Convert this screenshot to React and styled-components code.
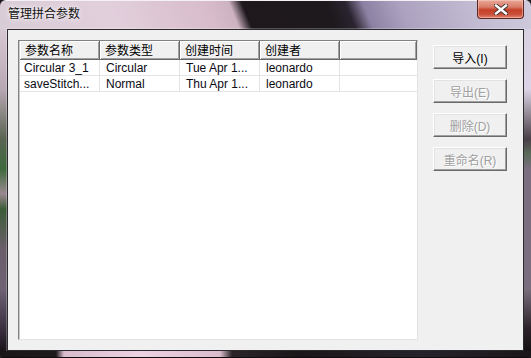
import React from "react";
import styled, { createGlobalStyle } from "styled-components";

const GlobalStyle = createGlobalStyle`
  html, body {
    margin: 0;
    padding: 0;
    background: #1c1a1c;
  }
  body {
    font-family: "Liberation Sans", "Noto Sans CJK SC", sans-serif;
    font-size: 12px;
  }
`

const Window = styled.div`
  width: 531px;
  height: 358px;
  box-sizing: border-box;
  display: flex;
  flex-direction: column;
  border-radius: 6px 6px 4px 4px;
  overflow: hidden;
  background: #2a2429;
  box-shadow: inset 0 0 0 1px #151215, inset 0 0 0 2px rgba(255,255,255,0.35);
`

const TitleBar = styled.div`
  height: 29px;
  flex: none;
  display: flex;
  align-items: flex-start;
  justify-content: space-between;
  box-sizing: border-box;
  border-top: 1px solid #f4f0f4;
  background: linear-gradient(
    68deg,
    #d8ccd6 0px,
    #e2cfdc 110px,
    #d8bccb 200px,
    #cdb2c2 222px,
    #1e181c 234px,
    #1d191c 312px,
    #2a2430 330px,
    #8d81a3 346px,
    #aca2c0 380px,
    #c6c0d6 460px,
    #d6d0e0 531px
  );
`

const Title = styled.div`
  margin: 4px 0 0 8px;
  font-family: "Noto Sans CJK SC", sans-serif;
  font-size: 12px;
  line-height: 16px;
  color: #111;
  text-shadow: 0 0 6px rgba(255,255,255,0.9), 0 0 3px rgba(255,255,255,0.8);
`

const CloseButton = styled.div`
  width: 47px;
  height: 19px;
  margin: -1px 7px 0 0;
  box-sizing: border-box;
  border: 1px solid #5a2620;
  border-top: none;
  border-radius: 0 0 4px 4px;
  background: linear-gradient(to bottom, #e9a898 0%, #d87a66 40%, #c43e26 55%, #c9503a 80%, #e2856e 100%);
  box-shadow: inset 0 0 0 1px rgba(255,220,210,0.45);
  display: flex;
  align-items: center;
  justify-content: center;
`

const Middle = styled.div`
  flex: 1;
  display: flex;
  min-height: 0;
`

const SideFrame = styled.div`
  width: 7px;
  flex: none;
  background: ${p => p.$side === "left"
    ? "linear-gradient(to bottom, #d8c8d4 0px, #b8a8b4 60px, #5a6452 110px, #3e6a3c 140px, #9a8890 165px, #3c5c36 180px, #6a5e6a 220px, #6e6274 260px, #3a3040 300px, #1a1418 322px)"
    : "linear-gradient(to bottom, #d8d0e0 0px, #dcd4e6 60px, #4a4048 110px, #5a6a5a 125px, #7a6e80 140px, #7a6e7e 260px, #2a2228 300px, #161214 322px)"};
`

const BottomFrame = styled.div`
  height: 7px;
  flex: none;
  background: linear-gradient(to right, #1a1618 0px, #1e1a1c 56px, #d8bccc 64px, #ecd2e2 140px, #dcbccc 220px, #2a2428 232px, #1a1618 300px, #26222a 420px, #1a1618 531px);
  box-shadow: inset 0 -1px 0 #0e0c0e;
`

const Client = styled.div`
  flex: 1;
  display: flex;
  align-items: flex-start;
  gap: 15px;
  box-sizing: border-box;
  padding: 10px 16px 10px 10px;
  background: #f0f0f0;
  border: 1px solid #2c2a2e;
  box-shadow: 0 0 0 1px rgba(255,255,255,0.25);
`

const ListView = styled.div`
  width: 400px;
  height: 300px;
  box-sizing: border-box;
  background: #fff;
  border-style: solid;
  border-width: 1px;
  border-color: #828282 #e3e3e3 #e3e3e3 #828282;
  box-shadow: inset 1px 0 0 #c8c8c8;
  padding-left: 1px;
  display: flex;
  flex-direction: column;
`

const HeaderRow = styled.div`
  display: flex;
  height: 19px;
  flex: none;
  background: #f0f0f0;
`

const HeaderCell = styled.div`
  width: ${p => p.$width}px;
  flex: ${p => (p.$fill ? 1 : "none")};
  box-sizing: border-box;
  padding-left: 5px;
  font-family: "Noto Sans CJK SC", sans-serif;
  font-size: 12px;
  line-height: 17px;
  color: #000;
  border-right: 1px solid #696969;
  border-bottom: 1px solid #696969;
  box-shadow: inset 1px 1px 0 #fff, inset -1px -1px 0 #a0a0a0;
  white-space: nowrap;
  overflow: hidden;
`

const Row = styled.div`
  display: flex;
  height: 16px;
  flex: none;
  box-sizing: border-box;
  border-bottom: 1px solid #e4e4e4;
`

const Cell = styled.div`
  width: ${p => p.$width}px;
  flex: ${p => (p.$fill ? 1 : "none")};
  box-sizing: border-box;
  padding-left: ${p => p.$pad}px;
  border-right: ${p => (p.$fill ? "none" : "1px solid #e4e4e4")};
  font-family: "Liberation Sans", sans-serif;
  font-size: 12px;
  line-height: 17px;
  color: #0a0a14;
  white-space: nowrap;
  overflow: hidden;
`

const ButtonColumn = styled.div`
  display: flex;
  flex-direction: column;
  gap: 10px;
  padding-top: 5px;
`

const Button = styled.div`
  width: 74px;
  height: 24px;
  box-sizing: border-box;
  display: flex;
  align-items: center;
  justify-content: center;
  background: #f0f0f0;
  border-style: solid;
  border-width: 1px;
  border-color: #fff #696969 #696969 #fff;
  box-shadow: inset -1px -1px 0 #a0a0a0, inset 1px 1px 0 #e3e3e3;
  font-family: "Liberation Sans", "Noto Sans CJK SC", sans-serif;
  font-size: 12px;
  color: ${p => (p.$disabled ? "#a0a0a0" : "#000")};
  text-shadow: ${p => (p.$disabled ? "1px 1px 0 #fff" : "none")};
  padding-top: 1px;
`

const columns = [
  { name: "参数名称", width: 80, pad: 4 },
  { name: "参数类型", width: 80, pad: 6 },
  { name: "创建时间", width: 80, pad: 6 },
  { name: "创建者", width: 80, pad: 6 },
]

const rows = [
  ["Circular 3_1", "Circular", "Tue Apr 1...", "leonardo"],
  ["saveStitch...", "Normal", "Thu Apr 1...", "leonardo"],
]

const buttons = [
  { label: "导入(I)", disabled: false },
  { label: "导出(E)", disabled: true },
  { label: "删除(D)", disabled: true },
  { label: "重命名(R)", disabled: true },
]

const CloseIcon = () => (
  <svg width="14" height="11" viewBox="0 0 14 11">
    <path d="M2 1.5 L12 9.5 M12 1.5 L2 9.5" stroke="#3a2a2a" strokeWidth="4.2" strokeLinecap="square" />
    <path d="M2 1.5 L12 9.5 M12 1.5 L2 9.5" stroke="#fff" strokeWidth="2.4" strokeLinecap="square" />
  </svg>
)

const App = () => {
  return (
    <>
      <GlobalStyle />
      <Window>
        <TitleBar>
          <Title>管理拼合参数</Title>
          <CloseButton>
            <CloseIcon />
          </CloseButton>
        </TitleBar>
        <Middle>
          <SideFrame $side="left" />
          <Client>
            <ListView>
              <HeaderRow>
                {columns.map(col => (
                  <HeaderCell key={col.name} $width={col.width}>{col.name}</HeaderCell>
                ))}
                <HeaderCell $fill />
              </HeaderRow>
              {rows.map((row, i) => (
                <Row key={i}>
                  {row.map((value, j) => (
                    <Cell key={j} $width={columns[j].width} $pad={columns[j].pad}>{value}</Cell>
                  ))}
                  <Cell $fill />
                </Row>
              ))}
            </ListView>
            <ButtonColumn>
              {buttons.map(b => (
                <Button key={b.label} $disabled={b.disabled}>{b.label}</Button>
              ))}
            </ButtonColumn>
          </Client>
          <SideFrame $side="right" />
        </Middle>
        <BottomFrame />
      </Window>
    </>
  )
}

export default App
